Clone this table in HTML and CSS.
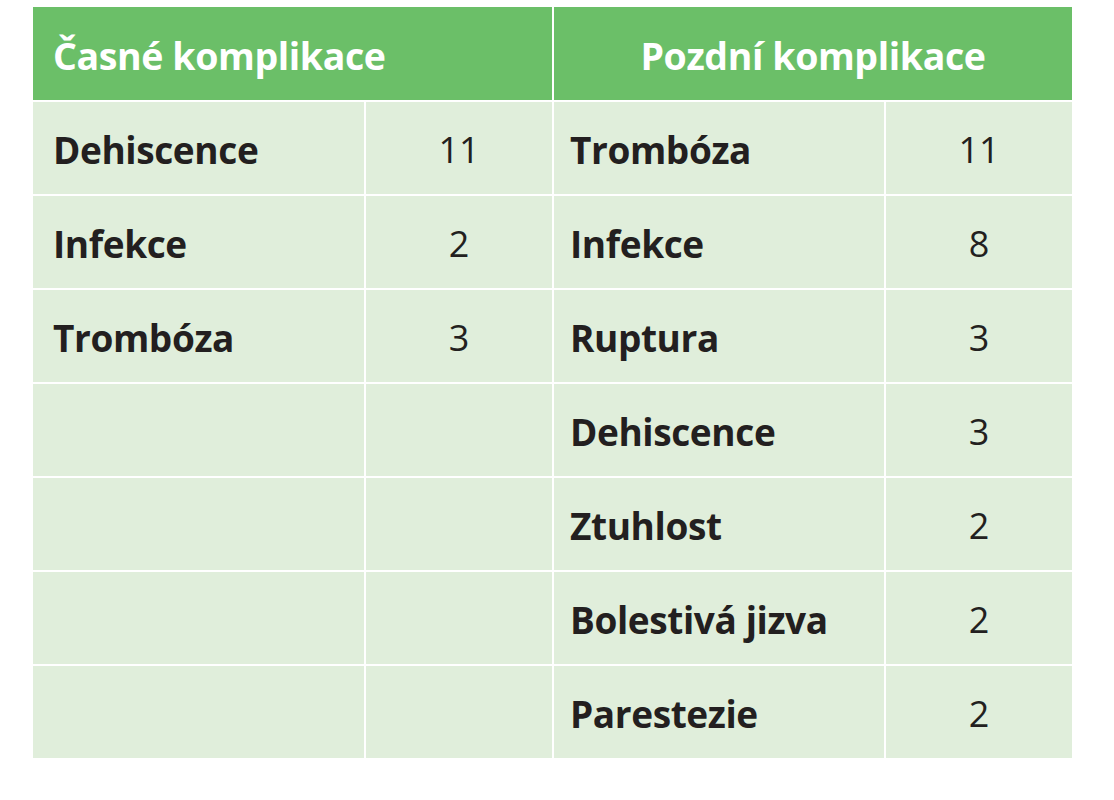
FILE: index.html
```html
<!DOCTYPE html>
<html lang="cs">
<head>
<meta charset="utf-8">
<title>Komplikace</title>
<link rel="stylesheet" href="styles.css">
</head>
<body>
<div class="table">
  <div class="head head-left">Časné komplikace</div>
  <div class="head head-right">Pozdní komplikace</div>

  <div class="cell name">Dehiscence</div><div class="cell num">11</div>
  <div class="cell name name-r">Trombóza</div><div class="cell num">11</div>

  <div class="cell name">Infekce</div><div class="cell num">2</div>
  <div class="cell name name-r">Infekce</div><div class="cell num">8</div>

  <div class="cell name">Trombóza</div><div class="cell num">3</div>
  <div class="cell name name-r">Ruptura</div><div class="cell num">3</div>

  <div class="cell name"></div><div class="cell num"></div>
  <div class="cell name name-r">Dehiscence</div><div class="cell num">3</div>

  <div class="cell name"></div><div class="cell num"></div>
  <div class="cell name name-r">Ztuhlost</div><div class="cell num">2</div>

  <div class="cell name"></div><div class="cell num"></div>
  <div class="cell name name-r">Bolestivá jizva</div><div class="cell num">2</div>

  <div class="cell name"></div><div class="cell num"></div>
  <div class="cell name name-r">Parestezie</div><div class="cell num">2</div>
</div>
</body>
</html>
```

FILE: styles.css
```css
html, body {
  margin: 0;
  padding: 0;
  background: #ffffff;
}

body {
  padding: 7px 0 0 33px;
  font-family: "Open Sans", "Liberation Sans", sans-serif;
  color: #231f20;
}

.table {
  display: grid;
  grid-template-columns: 331px 186px 330px 186px;
  grid-template-rows: 93px repeat(7, 92px);
  gap: 2px;
  width: 1039px;
  background: #ffffff;
}

.head {
  grid-column: span 2;
  background: #6bbf68;
  color: #ffffff;
  font-weight: 700;
  font-size: 37.5px;
  letter-spacing: -0.4px;
  display: flex;
  align-items: center;
  padding-top: 3px;
}

.head-left {
  padding-left: 20px;
}

.head-right {
  justify-content: center;
}

.cell {
  background: #e0eedb;
  display: flex;
  align-items: center;
  font-size: 37px;
  padding-top: 2px;
}

.name {
  padding-left: 20px;
  font-weight: 700;
  letter-spacing: -0.4px;
}

.name-r {
  padding-left: 16px;
}

.num {
  justify-content: center;
  font-weight: 400;
  font-size: 36px;
}
```
